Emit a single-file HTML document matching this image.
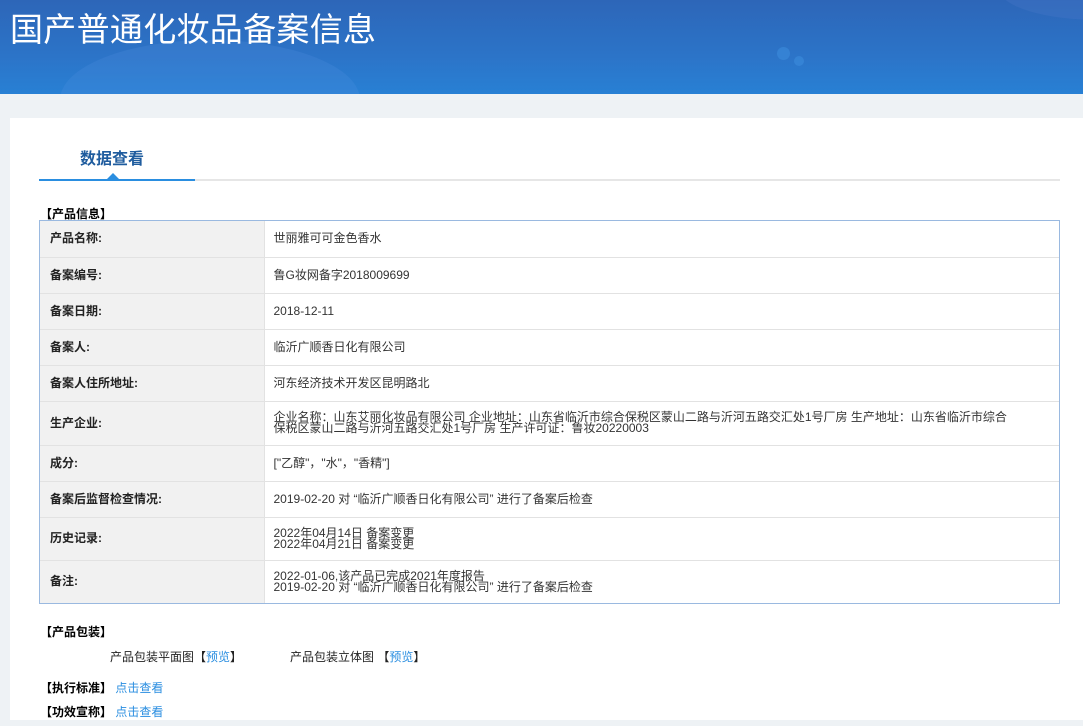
<!DOCTYPE html>
<html><head><meta charset="utf-8"><style>
*{margin:0;padding:0;box-sizing:border-box}
body{width:1083px;height:726px;overflow:hidden;background:#eef2f5;font-family:"Liberation Sans","Microsoft YaHei","Noto Sans CJK SC",sans-serif;font-size:12px;color:#333;position:relative}
.hdr{position:absolute;left:0;top:0;width:1083px;height:94px;background:linear-gradient(180deg,#2d66b8 0%,#2c74c8 60%,#2880d4 100%);overflow:hidden}
.hdr h1{position:absolute;left:10px;top:7px;font-size:33px;font-weight:normal;color:#fff;font-family:"Noto Sans CJK SC",sans-serif;line-height:40px;letter-spacing:0.3px}
.blob{position:absolute;border-radius:50%;background:rgba(80,160,230,0.25)}
.panel{position:absolute;left:10px;top:118px;width:1073px;height:602px;background:#fff}
.tab{position:absolute;left:70px;top:27px;font-size:16px;font-weight:bold;color:#1f5c9e}
.line{position:absolute;left:29px;top:61px;width:1021px;height:2px;background:#e6e6e6}
.line b{position:absolute;left:0;top:0;width:156px;height:2px;background:#2a8ee0}
.tri{position:absolute;left:97px;top:55px;width:0;height:0;border-left:6px solid transparent;border-right:6px solid transparent;border-bottom:6px solid #2a8ee0}
.sec{position:absolute;font-weight:bold;color:#000;font-size:12px}
.tw{position:absolute;left:29px;top:102px;width:1021px;border:1px solid #9ab9e0}
table{width:100%;border-collapse:collapse}
td{border:1px solid #e2e2e2;font-size:12px;line-height:11px;vertical-align:middle}
tr:first-child td{border-top:none}
tr:last-child td{border-bottom:none}
td.l{border-left:none;width:224px;background:#f1f1f1;font-weight:bold;color:#222;padding-left:10px}
td.v{border-right:none;padding-left:9px;color:#333}
a{color:#2a8ee0;text-decoration:none}
</style></head><body>
<div class="hdr">
<div class="blob" style="left:60px;top:40px;width:300px;height:120px;background:rgba(90,150,230,0.2)"></div>
<div class="blob" style="left:1000px;top:-40px;width:200px;height:60px;background:rgba(90,130,210,0.2)"></div>
<div class="blob" style="left:777px;top:47px;width:13px;height:13px;background:rgba(60,140,220,0.6)"></div>
<div class="blob" style="left:794px;top:56px;width:10px;height:10px;background:rgba(60,140,220,0.6)"></div>
<h1>国产普通化妆品备案信息</h1>
</div>
<div class="panel">
<div class="tab">数据查看</div>
<div class="line"><b></b></div>
<div class="tri"></div>
<div class="sec" style="left:30px;top:87px">【产品信息】</div>
<div class="tw"><table>
<tr style="height:36px"><td class="l">产品名称:</td><td class="v">世丽雅可可金色香水</td></tr>
<tr style="height:36px"><td class="l">备案编号:</td><td class="v">鲁G妆网备字2018009699</td></tr>
<tr style="height:36px"><td class="l">备案日期:</td><td class="v">2018-12-11</td></tr>
<tr style="height:36px"><td class="l">备案人:</td><td class="v">临沂广顺香日化有限公司</td></tr>
<tr style="height:36px"><td class="l">备案人住所地址:</td><td class="v">河东经济技术开发区昆明路北</td></tr>
<tr style="height:44px"><td class="l">生产企业:</td><td class="v">企业名称：山东艾丽化妆品有限公司 企业地址：山东省临沂市综合保税区蒙山二路与沂河五路交汇处1号厂房 生产地址：山东省临沂市综合<br>保税区蒙山二路与沂河五路交汇处1号厂房 生产许可证：鲁妆20220003</td></tr>
<tr style="height:36px"><td class="l">成分:</td><td class="v">["乙醇"，"水"，"香精"]</td></tr>
<tr style="height:36px"><td class="l">备案后监督检查情况:</td><td class="v">2019-02-20 对 “临沂广顺香日化有限公司” 进行了备案后检查</td></tr>
<tr style="height:43px"><td class="l">历史记录:</td><td class="v">2022年04月14日 备案变更<br>2022年04月21日 备案变更</td></tr>
<tr style="height:43px"><td class="l">备注:</td><td class="v">2022-01-06,该产品已完成2021年度报告<br>2019-02-20 对 “临沂广顺香日化有限公司” 进行了备案后检查</td></tr>
</table></div>
<div class="sec" style="left:30px;top:505px">【产品包装】</div>
<div style="position:absolute;left:100px;top:530px;color:#222">产品包装平面图【<a>预览</a>】</div>
<div style="position:absolute;left:280px;top:530px;color:#222">产品包装立体图 【<a>预览</a>】</div>
<div class="sec" style="left:30px;top:561px">【执行标准】 <a style="font-weight:normal">点击查看</a></div>
<div class="sec" style="left:30px;top:585px">【功效宣称】 <a style="font-weight:normal">点击查看</a></div>
</div>
</body></html>
